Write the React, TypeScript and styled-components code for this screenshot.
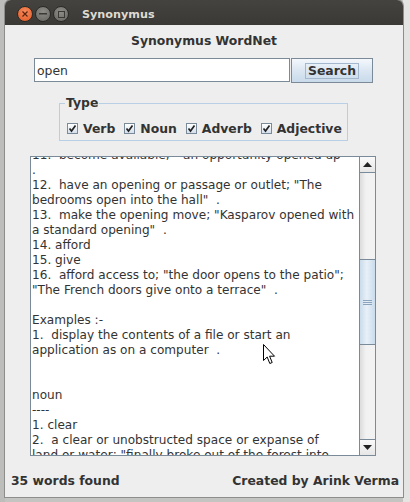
import React, { useLayoutEffect, useRef } from 'react'
import styled, { createGlobalStyle } from 'styled-components'

const GlobalStyle = createGlobalStyle`
    html, body {
        margin: 0;
        padding: 0;
        background: #c4c4c2;
        overflow: hidden;
    }
`;

const Desktop = styled.div`
    position: relative;
    width: 410px;
    height: 502px;
    display: flex;
    padding: 0 7px 5px 5px;
    box-sizing: border-box;
    background: linear-gradient(90deg, #bdbdbb 0, #bdbdbb 5px, transparent 5px, transparent 403px, #e4e4e2 403px);
    font-family: "DejaVu Sans", "Liberation Sans", sans-serif;
`;

const Window = styled.div`
    flex: 1;
    display: flex;
    flex-direction: column;
    border-radius: 6px 6px 0 0;
    overflow: hidden;
    box-shadow: 0 0 0 1px #8d8d8b;
`;

const TitleBar = styled.div`
    height: 25px;
    flex: none;
    display: flex;
    align-items: center;
    padding: 3px 0 0 12px;
    box-sizing: border-box;
    background: linear-gradient(#44433f, #3a3935);
`;

const WinButton = styled.span<{ $kind: 'close' | 'min' | 'max' }>`
    width: 16px;
    height: 16px;
    border-radius: 50%;
    margin-right: 2px;
    display: flex;
    align-items: center;
    justify-content: center;
    box-sizing: border-box;
    background: ${p => p.$kind === 'close'
        ? 'radial-gradient(circle at 50% 35%, #f78a5c, #e05a25)'
        : 'radial-gradient(circle at 50% 35%, #8e8d88, #65645f)'};
    border: 1px solid #2c2b28;
`;

const TitleText = styled.span`
    margin-left: 11px;
    color: #dfdbd2;
    font-weight: bold;
    font-size: 11.2px;
`;

const Body = styled.div`
    flex: 1;
    display: flex;
    flex-direction: column;
    background: #eeeeee;
    color: #333333;
    font-size: 12.4px;
`;

const Heading = styled.div`
    text-align: center;
    font-weight: bold;
    padding-top: 8px;
    height: 33px;
    line-height: 16px;
    box-sizing: border-box;
`;

const SearchRow = styled.div`
    display: flex;
    align-items: stretch;
    height: 25px;
    padding-left: 29px;
`;

const SearchInput = styled.div`
    width: 256px;
    height: 24px;
    box-sizing: border-box;
    background: #ffffff;
    border: 1px solid #7a8a99;
    padding-left: 2px;
    display: flex;
    align-items: center;
`;

const SearchButton = styled.div`
    width: 82px;
    margin-left: 1px;
    box-sizing: border-box;
    border: 1px solid #7a8a99;
    background: linear-gradient(#f4f8fc 0%, #dde8f3 45%, #c9daea 100%);
    display: flex;
    align-items: center;
    justify-content: center;
    font-weight: bold;
`;

const FocusBox = styled.span`
    border: 1px solid #a3b8cc;
    padding: 0 2px;
    line-height: 14px;
`;

const TypeBox = styled.fieldset`
    margin: 14px 0 0 54px;
    width: 289px;
    box-sizing: border-box;
    border: 1px solid #b8cfe5;
    padding: 0 0 5px 7px;
    min-inline-size: 0;
`;

const Legend = styled.legend`
    font-weight: bold;
    padding: 0 1px;
    margin-left: -2px;
    line-height: 12px;
    height: 12px;
`;

const CheckRow = styled.div`
    display: flex;
    align-items: center;
    gap: 9px;
    height: 14px;
    margin-top: 12px;
`;

const CheckItem = styled.label`
    display: flex;
    align-items: center;
    gap: 5px;
    font-weight: bold;
`;

const CheckBox = styled.span`
    width: 11px;
    height: 11px;
    box-sizing: border-box;
    border: 1px solid #7a8a99;
    background: linear-gradient(#ffffff, #d4e0ec);
    display: flex;
    align-items: center;
    justify-content: center;
`;

const ResultPanel = styled.div`
    margin: 15px 0 0 25px;
    width: 346px;
    height: 300px;
    flex: none;
    box-sizing: border-box;
    border: 1px solid #7a8a99;
    background: #ffffff;
    display: flex;
`;

const ResultText = styled.div`
    flex: 1;
    overflow: hidden;
    padding-left: 1px;
    white-space: pre;
    line-height: 15px;
    font-size: 12.1px;
    color: #333333;
`;

const ScrollBar = styled.div`
    width: 15px;
    flex: none;
    display: flex;
    flex-direction: column;
    border-left: 1px solid #7a8a99;
    background: #eeeeee;
`;

const ArrowButton = styled.div`
    height: 16px;
    flex: none;
    box-sizing: border-box;
    background: linear-gradient(#fafafa, #e6e6e6);
    border-bottom: 1px solid #7a8a99;
    display: flex;
    align-items: center;
    justify-content: center;
    &:last-child {
        border-bottom: none;
        border-top: 1px solid #7a8a99;
    }
`;

const Track = styled.div`
    flex: 1;
    display: flex;
    flex-direction: column;
    background: linear-gradient(90deg, #dcdcdc, #f2f2f2 40%);
`;

const TrackSpace = styled.div<{ $size: number }>`
    height: ${p => p.$size}px;
    flex: none;
`;

const Thumb = styled.div`
    height: 86px;
    box-sizing: border-box;
    border-top: 1px solid #7a8a99;
    border-bottom: 1px solid #7a8a99;
    background: linear-gradient(90deg, #c9dbeb, #e8f0f8 45%, #c9dbeb);
    display: flex;
    align-items: center;
    justify-content: center;
`;

const Footer = styled.div`
    flex: 1;
    display: flex;
    justify-content: space-between;
    align-items: center;
    padding: 8px 4px 0 6px;
    font-weight: bold;
`;

const Pointer = styled.svg`
    position: absolute;
    left: 263px;
    top: 344px;
`;

const Check = () => (
    <svg width="9" height="9" viewBox="0 0 9 9">
        <path d="M1.5 4.5 L3.5 7 L7.5 1.5" stroke="#222" strokeWidth="1.7" fill="none" />
    </svg>
);

const Tri = ({ up }: { up: boolean }) => (
    <svg width="9" height="5" viewBox="0 0 9 5">
        <path d={up ? 'M0 5 L4.5 0 L9 5 Z' : 'M0 0 L9 0 L4.5 5 Z'} fill="#222" />
    </svg>
);

const LINES = [
    '11.  become available;  "an opportunity opened up"',
    '.',
    '12.  have an opening or passage or outlet; "The',
    'bedrooms open into the hall"  .',
    '13.  make the opening move; "Kasparov opened with',
    'a standard opening"  .',
    '14. afford',
    '15. give',
    '16.  afford access to; "the door opens to the patio";',
    '"The French doors give onto a terrace"  .',
    '',
    'Examples :-',
    '1.  display the contents of a file or start an',
    'application as on a computer  .',
    '',
    '',
    'noun',
    '----',
    '1. clear',
    '2.  a clear or unobstructed space or expanse of',
    'land or water; "finally broke out of the forest into',
];

const TYPES = ['Verb', 'Noun', 'Adverb', 'Adjective'];

export default function App() {
    const textRef = useRef<HTMLDivElement>(null);

    useLayoutEffect(() => {
        if (textRef.current) textRef.current.scrollTop = 9;
    }, []);

    return <Desktop>
        <GlobalStyle />
        <Window>
            <TitleBar>
                <WinButton $kind="close">
                    <svg width="6" height="6" viewBox="0 0 6 6">
                        <path d="M0.5 0.5 L5.5 5.5 M5.5 0.5 L0.5 5.5" stroke="#5a2410" strokeWidth="1.2" />
                    </svg>
                </WinButton>
                <WinButton $kind="min">
                    <svg width="8" height="2" viewBox="0 0 8 2">
                        <rect width="8" height="1.5" fill="#3a3935" />
                    </svg>
                </WinButton>
                <WinButton $kind="max">
                    <svg width="7" height="7" viewBox="0 0 7 7">
                        <rect x="0.5" y="0.5" width="6" height="6" stroke="#3a3935" fill="none" />
                    </svg>
                </WinButton>
                <TitleText>Synonymus</TitleText>
            </TitleBar>
            <Body>
                <Heading>Synonymus WordNet</Heading>
                <SearchRow>
                    <SearchInput>open</SearchInput>
                    <SearchButton><FocusBox>Search</FocusBox></SearchButton>
                </SearchRow>
                <TypeBox>
                    <Legend>Type</Legend>
                    <CheckRow>
                        {TYPES.map(t =>
                            <CheckItem key={t}>
                                <CheckBox><Check /></CheckBox>
                                {t}
                            </CheckItem>
                        )}
                    </CheckRow>
                </TypeBox>
                <ResultPanel>
                    <ResultText ref={textRef}>{LINES.join('\n')}</ResultText>
                    <ScrollBar>
                        <ArrowButton><Tri up /></ArrowButton>
                        <Track>
                            <TrackSpace $size={86} />
                            <Thumb>
                                <svg width="9" height="5" viewBox="0 0 9 5">
                                    <path d="M0 0.5 H9 M0 2.5 H9 M0 4.5 H9" stroke="#8ca3bd" />
                                </svg>
                            </Thumb>
                        </Track>
                        <ArrowButton><Tri up={false} /></ArrowButton>
                    </ScrollBar>
                </ResultPanel>
                <Footer>
                    <span>35 words found</span>
                    <span>Created by Arink Verma</span>
                </Footer>
            </Body>
        </Window>
        <Pointer width="13" height="21" viewBox="0 0 13 21">
            <path d="M0.5 0.5 L0.5 16.5 L4.2 13 L6.8 19.5 L9.2 18.5 L6.6 12.2 L11.5 12.2 Z" fill="#ffffff" stroke="#000000" strokeWidth="1" strokeLinejoin="round" />
        </Pointer>
    </Desktop>
}
